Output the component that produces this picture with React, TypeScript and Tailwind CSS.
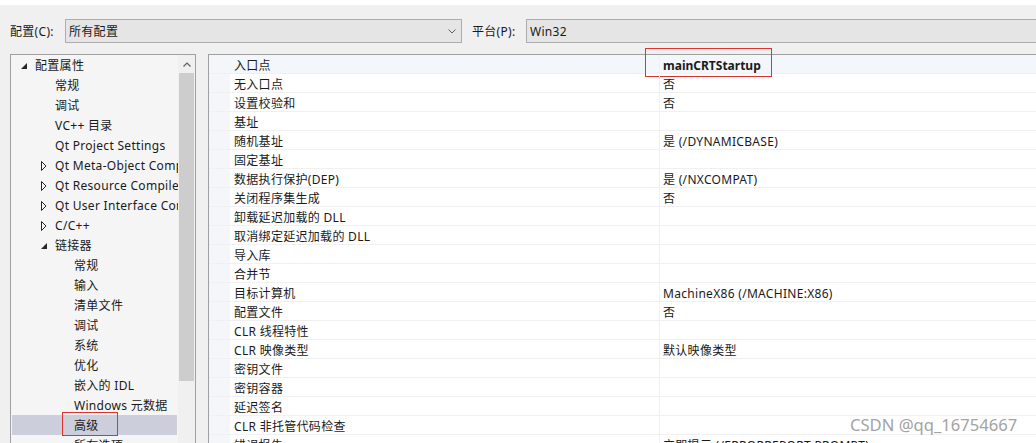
import React from 'react';

type TreeItem = {
  label: string;
  level: 0 | 1 | 2;
  arrow?: 'open' | 'closed';
  selected?: boolean;
  marked?: boolean;
};

const treeItems: TreeItem[] = [
  { label: '配置属性', level: 0, arrow: 'open' },
  { label: '常规', level: 1 },
  { label: '调试', level: 1 },
  { label: 'VC++ 目录', level: 1 },
  { label: 'Qt Project Settings', level: 1 },
  { label: 'Qt Meta-Object Compiler', level: 1, arrow: 'closed' },
  { label: 'Qt Resource Compiler', level: 1, arrow: 'closed' },
  { label: 'Qt User Interface Compiler', level: 1, arrow: 'closed' },
  { label: 'C/C++', level: 1, arrow: 'closed' },
  { label: '链接器', level: 1, arrow: 'open' },
  { label: '常规', level: 2 },
  { label: '输入', level: 2 },
  { label: '清单文件', level: 2 },
  { label: '调试', level: 2 },
  { label: '系统', level: 2 },
  { label: '优化', level: 2 },
  { label: '嵌入的 IDL', level: 2 },
  { label: 'Windows 元数据', level: 2 },
  { label: '高级', level: 2, selected: true, marked: true },
  { label: '所有选项', level: 2 },
];

const rows: [string, string][] = [
  ['入口点', 'mainCRTStartup'],
  ['无入口点', '否'],
  ['设置校验和', '否'],
  ['基址', ''],
  ['随机基址', '是 (/DYNAMICBASE)'],
  ['固定基址', ''],
  ['数据执行保护(DEP)', '是 (/NXCOMPAT)'],
  ['关闭程序集生成', '否'],
  ['卸载延迟加载的 DLL', ''],
  ['取消绑定延迟加载的 DLL', ''],
  ['导入库', ''],
  ['合并节', ''],
  ['目标计算机', 'MachineX86 (/MACHINE:X86)'],
  ['配置文件', '否'],
  ['CLR 线程特性', ''],
  ['CLR 映像类型', '默认映像类型'],
  ['密钥文件', ''],
  ['密钥容器', ''],
  ['延迟签名', ''],
  ['CLR 非托管代码检查', ''],
  ['错误报告', '立即提示 (/ERRORREPORT:PROMPT)'],
];

const levelPad = ['pl-[8px]', 'pl-[28px]', 'pl-[47px]'];

function Chevron() {
  return (
    <svg width="8" height="5" viewBox="0 0 8 5" className="text-[#606060]">
      <path d="M0.5 0.5 L4 4 L7.5 0.5" fill="none" stroke="currentColor" strokeWidth="1" />
    </svg>
  );
}

function TreeArrow({ kind }: { kind: 'open' | 'closed' }) {
  if (kind === 'open') {
    return (
      <svg width="6" height="6" viewBox="0 0 6 6" className="ml-[2px] -mt-[1px]">
        <polygon points="6,0 6,6 0,6" fill="#262626" />
      </svg>
    );
  }
  return (
    <svg width="6" height="10" viewBox="0 0 6 10" className="ml-[2px] -mt-[1px]">
      <polygon points="0.5,0.5 5,5 0.5,9.5" fill="none" stroke="#262626" strokeWidth="1" />
    </svg>
  );
}

export default function App() {
  return (
    <div className="relative w-[1036px] h-[443px] overflow-hidden bg-[#f0f0f0] text-[12px] tracking-[0.3px] text-[#1a1a1a] font-['Noto_Sans','Noto_Sans_CJK_SC',sans-serif]">
      <div className="h-[5px] bg-white" />

      {/* Configuration / platform bar */}
      <div className="flex items-center mt-[14px] h-[24px] pt-[2px]">
        <span className="ml-[10px] w-[55px]">配置(C):</span>
        <div className="w-[397px] h-[24px] -mt-[2px] flex items-center justify-between bg-[#e5e5e5] border border-[#adadad] pl-[3px] pr-[5px]">
          <span className="pt-[2px]">所有配置</span>
          <Chevron />
        </div>
        <span className="ml-[10px] w-[54px]">平台(P):</span>
        <div className="flex-1 h-[24px] -mt-[2px] flex items-center bg-[#e5e5e5] border border-[#adadad] border-r-0 pl-[3px]">
          <span className="pt-[2px]">Win32</span>
        </div>
      </div>

      <div className="flex mt-[11px] h-[400px]">
        {/* Tree */}
        <div className="ml-[10px] w-[186px] flex border border-[#a0a0a0] border-b-0 bg-[#f5f5f5]">
          <div className="flex-1 min-w-0 overflow-hidden whitespace-nowrap">
            {treeItems.map((item, i) => (
              <div
                key={i}
                className={`relative h-[20px] flex items-center pt-[2px] ${levelPad[item.level]} ${item.selected ? 'bg-[#cccedb] mx-[1px]' : ''}`}
              >
                <div className="w-[16px] shrink-0 flex items-center">
                  {item.arrow && <TreeArrow kind={item.arrow} />}
                </div>
                <span className={item.selected ? '-ml-[1px]' : ''}>{item.label}</span>
                {item.marked && (
                  <div className="absolute left-[50px] top-[-3px] w-[56px] h-[24px] border border-[#e0322f]" />
                )}
              </div>
            ))}
          </div>
          {/* Scrollbar */}
          <div className="w-[17px] shrink-0 bg-[#f0f0f0] flex flex-col items-center">
            <div className="h-[18px] flex items-center justify-center">
              <svg width="8" height="5" viewBox="0 0 8 5" className="text-[#606060]">
                <path d="M0.5 4.5 L4 1 L7.5 4.5" fill="none" stroke="currentColor" strokeWidth="1.2" />
              </svg>
            </div>
            <div className="w-[15px] h-[308px] bg-[#cdcdcd]" />
          </div>
        </div>

        {/* Property grid */}
        <div className="ml-[12px] flex-1 border-l border-t border-[#a0a0a0] bg-white">
          {rows.map(([name, value], i) => (
            <div
              key={i}
              className={`flex h-[19px] border-b border-[#f0f0f2] ${i === 0 ? 'bg-[#f3f6fb]' : ''}`}
            >
              <div className="w-[21px] shrink-0 bg-[#f4f6fa]" />
              <div className="w-[429px] shrink-0 pl-[4px] pt-[3px] flex items-center whitespace-nowrap">{name}</div>
              <div className="relative flex-1 border-l border-[#eef0f4] pl-[3px] pt-[3px] flex items-center whitespace-nowrap">
                <span className={i === 0 ? 'font-bold tracking-normal' : ''}>{value}</span>
                {i === 0 && (
                  <div className="absolute left-[-15px] top-[-7px] w-[127px] h-[29px] border border-[#e0322f]" />
                )}
              </div>
            </div>
          ))}
        </div>
      </div>

      <div className="absolute left-[850px] top-[413px] text-[16.6px] tracking-normal text-[#a3a3a3] font-['Noto_Sans',sans-serif]">
        CSDN @qq_16754667
      </div>
    </div>
  );
}
